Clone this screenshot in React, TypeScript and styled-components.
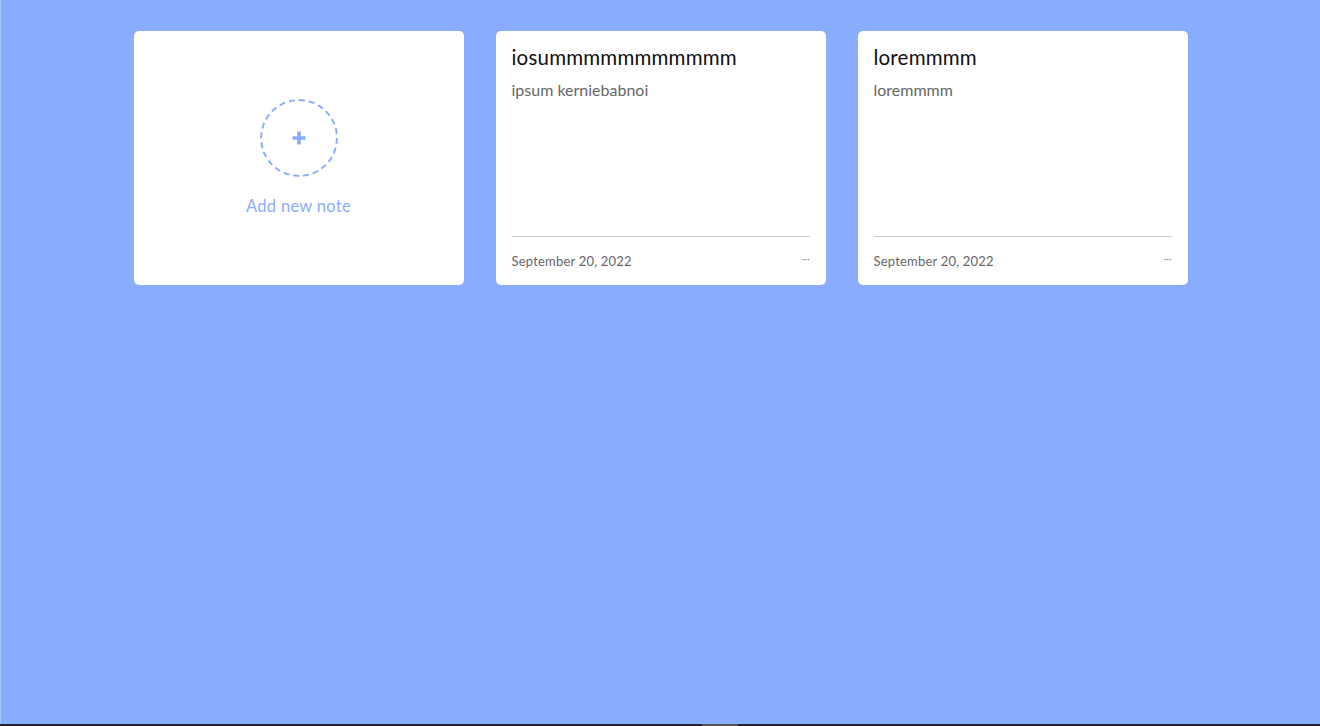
import React from "react";
import styled, { createGlobalStyle } from "styled-components";

interface Note {
  id: number;
  title: string;
  body: string;
  date: string;
}

const notes: Note[] = [
  { id: 1, title: "iosummmmmmmmmmm", body: "ipsum kerniebabnoi", date: "September 20, 2022" },
  { id: 2, title: "loremmmm", body: "loremmmm", date: "September 20, 2022" },
];

const App: React.FC = () => {
  return (
    <>
      <GlobalStyle />
      <Page>
        <Grid>
          <AddCard>
            <PlusCircle>
              <svg width="16" height="16" viewBox="0 0 16 16">
                <path d="M8 1.5v13M1.5 8h13" stroke="#8aacff" strokeWidth="3.6" />
              </svg>
            </PlusCircle>
            <AddLabel>Add new note</AddLabel>
          </AddCard>
          {notes.map((note) => (
            <NoteCard key={note.id}>
              <NoteTitle>{note.title}</NoteTitle>
              <NoteBody>{note.body}</NoteBody>
              <NoteFooter>
                <NoteDate>{note.date}</NoteDate>
                <MoreDots>···</MoreDots>
              </NoteFooter>
            </NoteCard>
          ))}
        </Grid>
      </Page>
      <BottomBar>
        <BarThumb />
      </BottomBar>
    </>
  );
};

export default App;

const GlobalStyle = createGlobalStyle`
  html, body {
    margin: 0;
    padding: 0;
    background: #8aacff;
    font-family: "Lato", "Open Sans", sans-serif;
    overflow: hidden;
  }
`;

const Page = styled.div`
  height: 724px;
  box-sizing: border-box;
  border-left: 1px solid #a6c6ff;
  padding-top: 31px;
`;

const Grid = styled.div`
  display: grid;
  grid-template-columns: repeat(3, 330px);
  gap: 32px;
  justify-content: center;
`;

const Card = styled.div`
  background: #fff;
  border-radius: 5px;
  height: 254px;
  box-sizing: border-box;
`;

const AddCard = styled(Card)`
  display: flex;
  flex-direction: column;
  align-items: center;
  justify-content: center;
  gap: 19px;
  padding-bottom: 2px;
`;

const PlusCircle = styled.div`
  width: 78px;
  height: 78px;
  box-sizing: border-box;
  border: 2px dashed #8aacff;
  border-radius: 50%;
  display: flex;
  align-items: center;
  justify-content: center;
`;

const AddLabel = styled.div`
  color: #8aacff;
  font-size: 16.5px;
  letter-spacing: 0.3px;
`;

const NoteCard = styled(Card)`
  display: flex;
  flex-direction: column;
  padding: 14px 16px 0;
`;

const NoteTitle = styled.div`
  font-size: 20.5px;
  color: #111;
  line-height: 24px;
  letter-spacing: 0.2px;
`;

const NoteBody = styled.div`
  flex: 1;
  margin-top: 11px;
  font-size: 16px;
  color: #666;
  line-height: 20px;
`;

const NoteFooter = styled.div`
  display: flex;
  justify-content: space-between;
  align-items: center;
  border-top: 1px solid #ccc;
  height: 49px;
  box-sizing: border-box;
`;

const NoteDate = styled.span`
  font-size: 13px;
  color: #666;
  letter-spacing: 0.2px;
`;

const MoreDots = styled.span`
  font-size: 10px;
  color: #888;
  margin-top: -6px;
`;

const BottomBar = styled.div`
  height: 2px;
  background: #1f2230;
  display: flex;
  justify-content: center;
  padding-left: 120px;
`;

const BarThumb = styled.div`
  width: 36px;
  background: #555;
`;
